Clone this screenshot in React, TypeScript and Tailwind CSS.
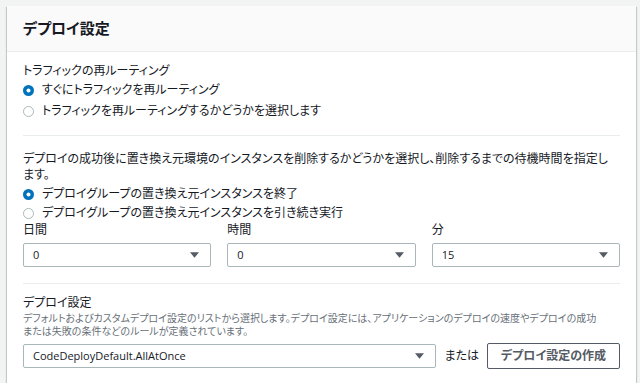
import React from 'react'

const FONT = "font-['Open_Sans','Noto_Sans_CJK_JP',sans-serif] [font-feature-settings:'palt']"

function Radio({ checked, label }: { checked: boolean; label: string }) {
  return (
    <label className="flex h-[20px] items-center gap-[8px]">
      <svg width="11" height="11" viewBox="0 0 11 11" className="shrink-0">
        {checked ? (
          <>
            <circle cx="5.5" cy="5.5" r="5.5" fill="#0073bb" />
            <circle cx="5.5" cy="5.5" r="2" fill="#fff" />
          </>
        ) : (
          <circle cx="5.5" cy="5.5" r="5" fill="#fff" stroke="#aab7b8" strokeWidth="1" />
        )}
      </svg>
      <span>{label}</span>
    </label>
  )
}

function Caret() {
  return (
    <svg width="9" height="6" viewBox="0 0 10 6" className="shrink-0">
      <path d="M0 0h10L5 6z" fill="#545b64" />
    </svg>
  )
}

function Select({ value, className = '' }: { value: string; className?: string }) {
  return (
    <div
      className={`flex h-[24px] items-center justify-between rounded-[2px] border border-[#aab7b8] bg-white pl-[9px] pr-[11px] text-[11px] text-[#16191f] ${className}`}
    >
      <span>{value}</span>
      <Caret />
    </div>
  )
}

export default function App() {
  return (
    <div className={`h-[383px] w-[640px] overflow-hidden bg-[#f2f3f3] pl-[7px] pt-[6px] ${FONT}`}>
      <div className="w-[629px] bg-white text-[12px] text-[#16191f] shadow-[0_1px_1px_0_rgba(0,28,36,0.3),1px_1px_1px_0_rgba(0,28,36,0.15),-1px_1px_1px_0_rgba(0,28,36,0.15)]">
        <div className="flex h-[46px] items-center border-b border-[#eaeded] bg-[#fafafa] px-[16px]">
          <h2 className="text-[15px] font-bold leading-none text-[#16191f]">デプロイ設定</h2>
        </div>

        <div className="px-[16px] pb-[15px] pt-[11px]">
          <div className="leading-[16px]">トラフィックの再ルーティング</div>
          <div className="mt-[1px]">
            <Radio checked label="すぐにトラフィックを再ルーティング" />
            <div className="mt-[1px]">
              <Radio checked={false} label="トラフィックを再ルーティングするかどうかを選択します" />
            </div>
          </div>

          <div className="mt-[14px] h-px bg-[#eaeded]" />

          <p className="mt-[15px] max-w-[590px] leading-[16px]">
            デプロイの成功後に置き換え元環境のインスタンスを削除するかどうかを選択し、削除するまでの待機時間を指定します。
          </p>
          <div className="mt-[1px]">
            <div className="h-[19px]">
              <Radio checked label="デプロイグループの置き換え元インスタンスを終了" />
            </div>
            <Radio checked={false} label="デプロイグループの置き換え元インスタンスを引き続き実行" />
          </div>

          <div className="mt-[-1px] grid grid-cols-3 gap-x-[16px]">
            {[
              { label: '日間', value: '0' },
              { label: '時間', value: '0' },
              { label: '分', value: '15' },
            ].map((f) => (
              <div key={f.label}>
                <div className="leading-[16px]">{f.label}</div>
                <Select value={f.value} className="mt-[5px]" />
              </div>
            ))}
          </div>

          <div className="mt-[16px] h-px bg-[#eaeded]" />

          <div className="mt-[11px] leading-[16px]">デプロイ設定</div>
          <p className="mt-[1px] text-[10px] leading-[13px] text-[#687078]">
            デフォルトおよびカスタムデプロイ設定のリストから選択します。デプロイ設定には、アプリケーションのデプロイの速度やデプロイの成功
            <br />
            または失敗の条件などのルールが定義されています。
          </p>
          <div className="mt-[5px] flex items-center">
            <Select value="CodeDeployDefault.AllAtOnce" className="flex-1 pr-[10px]" />
            <span className="mx-[8px]">または</span>
            <button className="h-[26px] w-[133px] rounded-[2px] border border-[#545b64] bg-white text-[12px] font-bold text-[#545b64]">
              デプロイ設定の作成
            </button>
          </div>
        </div>
      </div>
    </div>
  )
}
